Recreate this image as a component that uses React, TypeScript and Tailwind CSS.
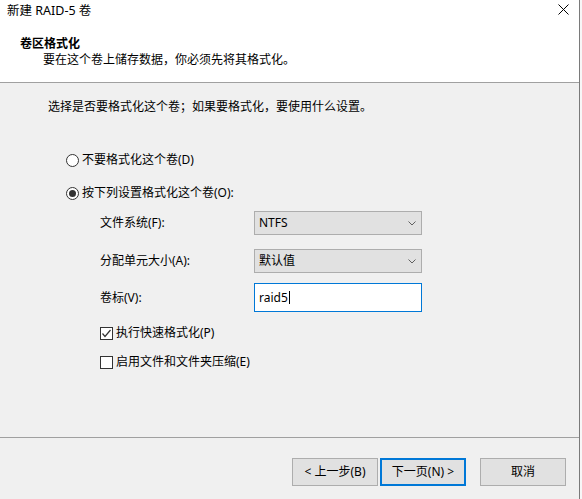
import type { ReactNode } from 'react'

// ── Small drawn controls (Windows 10 look) ──
function Radio({ checked }: { checked?: boolean }) {
  return (
    <span className="flex h-[13px] w-[13px] items-center justify-center rounded-full border border-[#333] bg-white">
      {checked && <span className="h-[7px] w-[7px] rounded-full bg-[#333]" />}
    </span>
  )
}

function Checkbox({ checked }: { checked?: boolean }) {
  return (
    <span className="flex h-[13px] w-[13px] items-center justify-center border border-[#333] bg-white">
      {checked && (
        <svg width="11" height="11" viewBox="0 0 11 11">
          <polyline points="1.5,5.5 4,8.5 9.5,2" fill="none" stroke="#333" strokeWidth="1.2" />
        </svg>
      )}
    </span>
  )
}

function Select({ value }: { value: string }) {
  return (
    <div className="flex h-[24px] w-[168px] items-center justify-between border border-[#adadad] bg-[#e1e1e1] pl-[4px] pr-[5px]">
      <span>{value}</span>
      <svg width="8" height="5" viewBox="0 0 8 5">
        <polyline points="0.5,0.5 4,4 7.5,0.5" fill="none" stroke="#606060" strokeWidth="1" />
      </svg>
    </div>
  )
}

function Field({ label, children, className }: { label: string; children: ReactNode; className?: string }) {
  return (
    <div className={`flex items-center ${className ?? ''}`}>
      <span className="w-[154px] pl-[100px] box-content">{label}</span>
      {children}
    </div>
  )
}

function Button({ children, primary }: { children: ReactNode; primary?: boolean }) {
  return (
    <div
      className={`flex h-[28px] w-[86px] items-center justify-center bg-[#e1e1e1] ${
        primary ? 'border-2 border-[#0078d7]' : 'border border-[#adadad]'
      }`}
    >
      {children}
    </div>
  )
}

export default function App() {
  return (
    <div className="flex h-[499px] w-[582px] overflow-hidden bg-white font-['Noto_Sans','Noto_Sans_CJK_SC',sans-serif] text-[12px] leading-[16px] text-black">
      <div className="flex w-[580px] shrink-0 flex-col border-r border-[#7a7a7a]">
        {/* title bar */}
        <div className="flex h-[22px] items-center justify-between bg-white pl-[7px] pr-[10px]">
          <span className="text-[12.5px]">新建 RAID-5 卷</span>
          <svg width="11" height="11" viewBox="0 0 11 11" className="-mt-[3px]">
            <path d="M0.5 0.5 L10.5 10.5 M10.5 0.5 L0.5 10.5" stroke="#000" strokeWidth="1" />
          </svg>
        </div>

        {/* header */}
        <div className="h-[61px] border-b border-[#a0a0a0] bg-white pt-[14px]">
          <div className="pl-[20px] font-bold">卷区格式化</div>
          <div className="pl-[43px]">要在这个卷上储存数据，你必须先将其格式化。</div>
        </div>

        {/* body */}
        <div className="h-[355px] border-b border-[#a0a0a0] bg-[#f0f0f0]">
          <p className="mt-[16px] pl-[48px]">选择是否要格式化这个卷；如果要格式化，要使用什么设置。</p>

          <div className="mt-[37px] flex items-center gap-[3px] pl-[66px]">
            <Radio />
            <span>不要格式化这个卷(D)</span>
          </div>
          <div className="mt-[17px] flex items-center gap-[3px] pl-[66px]">
            <Radio checked />
            <span>按下列设置格式化这个卷(O):</span>
          </div>

          <Field label="文件系统(F):" className="mt-[10px]">
            <Select value="NTFS" />
          </Field>
          <Field label="分配单元大小(A):" className="mt-[14px]">
            <Select value="默认值" />
          </Field>
          <Field label="卷标(V):" className="mt-[10px]">
            <div className="flex h-[29px] w-[168px] items-center border border-[#0078d7] bg-white pl-[4px]">
              <span>raid5</span>
              <span className="ml-[1px] h-[13px] w-[1px] bg-black" />
            </div>
          </Field>

          <div className="mt-[13px] flex items-center gap-[3px] pl-[100px]">
            <Checkbox checked />
            <span>执行快速格式化(P)</span>
          </div>
          <div className="mt-[13px] flex items-center gap-[3px] pl-[100px]">
            <Checkbox />
            <span>启用文件和文件夹压缩(E)</span>
          </div>
        </div>

        {/* footer */}
        <div className="flex flex-1 items-start bg-[#f0f0f0] pl-[292px] pt-[20px]">
          <Button>&lt; 上一步(B)</Button>
          <div className="ml-[2px]">
            <Button primary>下一页(N) &gt;</Button>
          </div>
          <div className="ml-[14px]">
            <Button>取消</Button>
          </div>
        </div>
      </div>
      <div className="flex-1 bg-[#f7f7f7]" />
    </div>
  )
}
